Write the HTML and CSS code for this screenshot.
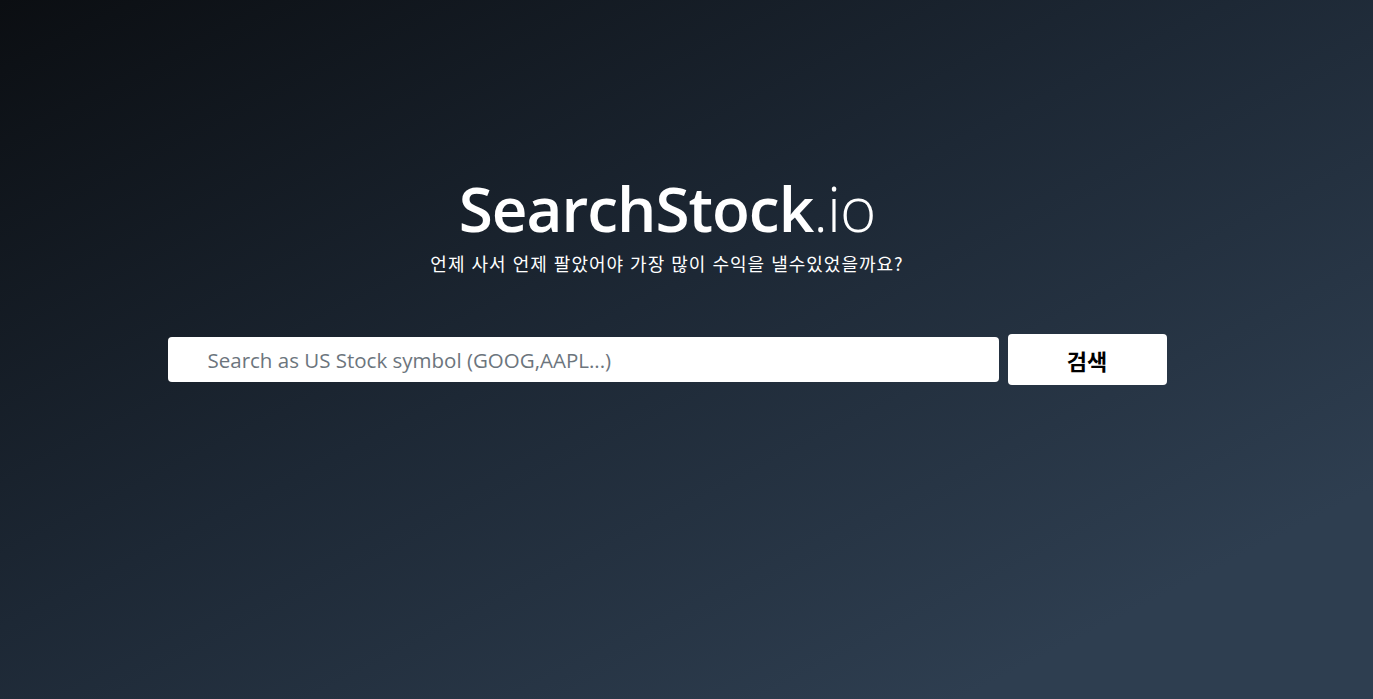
FILE: index.html
```html
<!DOCTYPE html>
<html lang="ko">
<head>
<meta charset="utf-8">
<title>SearchStock.io</title>
<link rel="stylesheet" href="styles.css">
</head>
<body>
<main class="page">
  <section class="hero">
    <h1 class="logo"><span class="logo-main">SearchStock</span><span class="logo-tld">.io</span></h1>
    <p class="tagline">언제 사서 언제 팔았어야 가장 많이 수익을 낼수있었을까요?</p>
    <form class="search">
      <input class="search-input" type="text" placeholder="Search as US Stock symbol (GOOG,AAPL...)">
      <button class="search-btn" type="button">검색</button>
    </form>
  </section>
</main>
</body>
</html>
```
FILE: styles.css
```css
html, body {
  margin: 0;
  padding: 0;
  height: 100%;
}
body {
  background: linear-gradient(to bottom right, #0b0e12 0%, #1d2835 45%, #2e3e50 85%, #2e3e50 100%);
  font-family: "Open Sans", "Noto Sans CJK KR", sans-serif;
  color: #fff;
}
.page {
  height: 100%;
  display: flex;
  justify-content: center;
  padding-right: 39px;
  box-sizing: border-box;
}
.hero {
  display: flex;
  flex-direction: column;
  align-items: center;
  padding-top: 168px;
}
.logo {
  margin: 0;
  font-size: 62px;
  line-height: 80px;
  font-weight: 600;
  letter-spacing: -1px;
}
.logo-tld {
  font-weight: 300;
}
.tagline {
  margin: 2px 0 0;
  font-family: "Noto Sans CJK KR", sans-serif;
  font-size: 18px;
  font-weight: 400;
  line-height: 26px;
  letter-spacing: 1px;
  color: #fff;
}
.search {
  display: flex;
  align-items: center;
  gap: 9px;
  margin-top: 58px;
}
.search-input {
  width: 831px;
  height: 45px;
  box-sizing: border-box;
  border: none;
  border-radius: 4px;
  padding: 0 40px;
  font-family: "Open Sans", sans-serif;
  font-size: 20.5px;
  color: #333;
  background: #fff;
  outline: none;
}
.search-input::placeholder {
  color: #6c757d;
}
.search-btn {
  width: 159px;
  height: 51px;
  border: none;
  border-radius: 4px;
  background: #fff;
  font-family: "Noto Sans CJK KR", sans-serif;
  font-weight: 700;
  font-size: 22px;
  color: #000;
}
```
